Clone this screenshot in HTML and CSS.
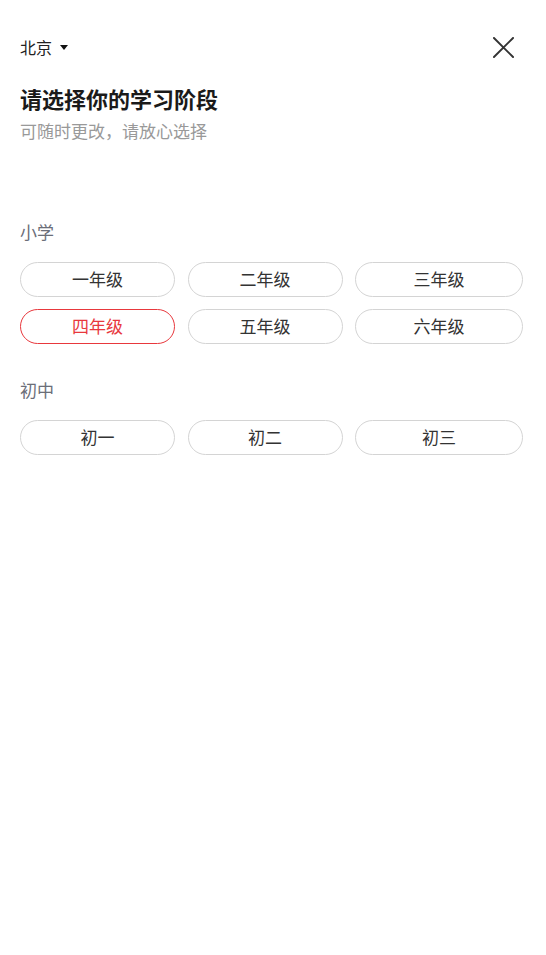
FILE: index.html
```html
<!DOCTYPE html>
<html lang="zh-CN">
<head>
  <meta charset="UTF-8" />
  <meta name="viewport" content="width=device-width, initial-scale=1.0"/>
  <title>选择学习阶段</title>
  <link rel="stylesheet" href="styles.css">
</head>
<body>
  <div class="page">
    <!-- Top bar -->
    <div class="top-bar">
      <div class="city">
        <span>北京</span>
        <span class="caret"></span>
      </div>
      <svg class="close" width="21" height="21" viewBox="0 0 22 22">
        <path d="M1 1 L21 21 M21 1 L1 21" stroke="#333" stroke-width="2" fill="none" stroke-linecap="round"/>
      </svg>
    </div>

    <h2 class="title">请选择你的学习阶段</h2>
    <p class="subtitle">可随时更改，请放心选择</p>

    <div class="stages">
      <div class="stage">
        <h4>小学</h4>
        <div class="grade-grid">
          <button class="grade">一年级</button>
          <button class="grade">二年级</button>
          <button class="grade">三年级</button>
          <button class="grade active">四年级</button>
          <button class="grade">五年级</button>
          <button class="grade">六年级</button>
        </div>
      </div>

      <div class="stage">
        <h4>初中</h4>
        <div class="grade-grid">
          <button class="grade">初一</button>
          <button class="grade">初二</button>
          <button class="grade">初三</button>
        </div>
      </div>
    </div>
  </div>
</body>
</html>
```

FILE: styles.css
```css
body {
  margin: 0;
  background-color: #fff;
  font-family: "Noto Sans CJK SC", "Noto Sans", sans-serif;
  color: #222;
}

.page {
  padding: 35px 23px 0 20px;
}

.top-bar {
  display: flex;
  justify-content: space-between;
  align-items: center;
  height: 24px;
}

.city {
  display: flex;
  align-items: center;
  font-size: 16px;
  color: #222;
}

.caret {
  margin-left: 8px;
  width: 0;
  height: 0;
  border-left: 4px solid transparent;
  border-right: 4px solid transparent;
  border-top: 5px solid #111;
}

.close {
  margin-right: 9px;
}

.title {
  margin: 24px 0 0;
  font-size: 22px;
  font-weight: 700;
  line-height: 30px;
  color: #1a1a1a;
}

.subtitle {
  margin: 6px 0 0;
  font-size: 17px;
  line-height: 24px;
  color: #999;
}

.stages {
  display: flex;
  flex-direction: column;
  gap: 34px;
  margin-top: 77px;
}

.stage h4 {
  margin: 0 0 18px;
  font-size: 17px;
  font-weight: 400;
  line-height: 24px;
  color: #6b6e78;
}

.grade-grid {
  display: grid;
  grid-template-columns: 155px 155px 1fr;
  column-gap: 12.5px;
  row-gap: 12px;
}

.grade {
  height: 35px;
  padding: 0 0 2px;
  font-family: inherit;
  font-size: 17px;
  color: #333;
  background-color: #fff;
  border: 1px solid #d4d4d4;
  border-radius: 18px;
}

.grade.active {
  color: #e8383d;
  border-color: #e8383d;
}
```
